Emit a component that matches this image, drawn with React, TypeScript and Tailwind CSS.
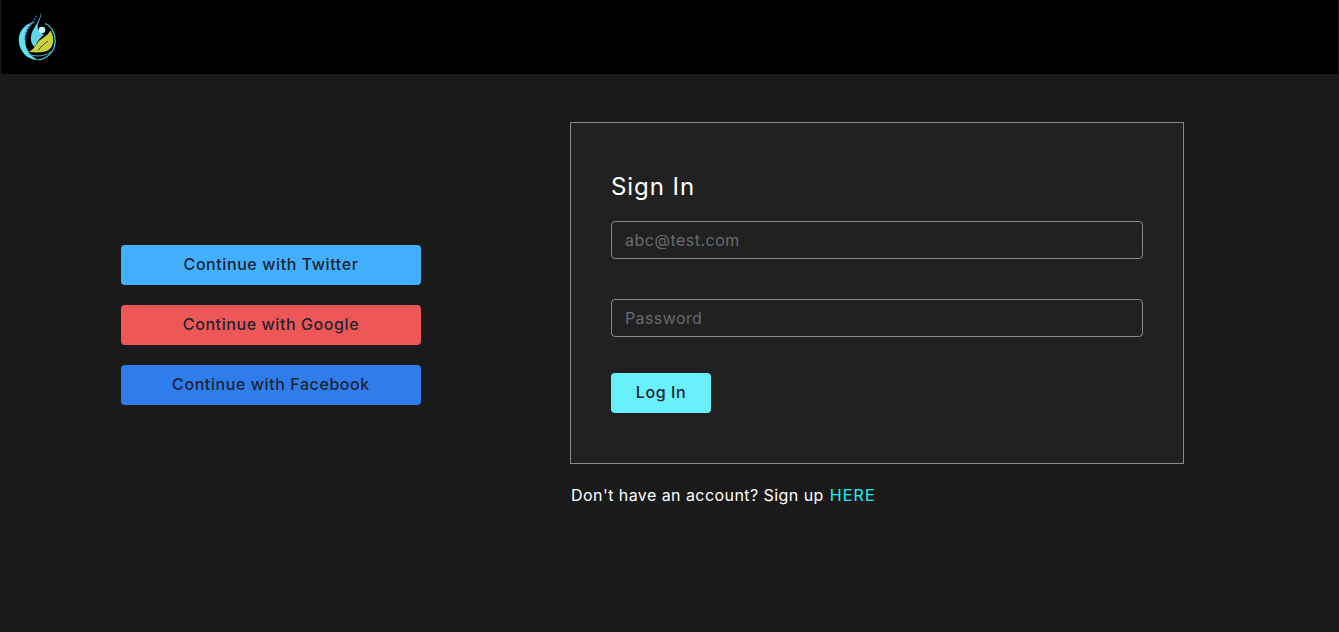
import React from "react";

function Logo() {
  return (
    <svg width="42" height="54" viewBox="17 9 42 54" className="block">
      <path d="M35 21.5 C25 23.5 18.4 31 18.8 41 C19.4 52 28 60 38 60 C30.5 56.5 26 50 25.2 42 C24.6 33.5 28 27 35 21.5 Z" fill="#5fe3f2" />
      <path d="M45 23.5 C51.5 26 55.2 33 55.2 41 C55.2 51 47.5 59 38 60" fill="none" stroke="#4fd3e2" strokeWidth="1.2" />
      <path d="M40.8 12.5 C41.6 18 38.6 21 37.8 25 C37.3 28 38 30 40 32 C41.5 33.5 43 34 44 34.5 C41 37 37 41 35 47 C32 45 30.5 41 31 37 C31.6 31 35 27 37 23.5 C39 20 40.4 16.5 40.8 12.5 Z" fill="#5fd6ea" />
      <circle cx="42" cy="30" r="3.3" fill="#c9f5fa" />
      <path d="M50.5 30.5 C54.5 37 54.5 46 48.5 50 C43.5 53 35 52.8 28.5 51.8 C32.5 50.5 35 47 37 43.5 C40 38.5 46.5 37.5 50.5 30.5 Z" fill="#c9d23a" />
      <path d="M38 50.5 C41 46.5 44.5 43.5 48 41" stroke="#23240f" strokeWidth="0.8" fill="none" />
      <path d="M28.5 54 C35 57 46 57 52.5 50.5" stroke="#3fb9c9" strokeWidth="1" fill="none" />
      <g fill="#2a62c4">
        <circle cx="36" cy="16.5" r="0.9" />
        <circle cx="34.6" cy="19.2" r="1" />
        <circle cx="32.6" cy="21.8" r="1.1" />
        <circle cx="30.6" cy="24.4" r="1.1" />
        <circle cx="28.8" cy="27" r="1.1" />
        <circle cx="27.2" cy="29.8" r="1.1" />
        <circle cx="26" cy="32.8" r="1" />
        <circle cx="25.4" cy="36" r="1" />
        <circle cx="25.2" cy="39" r="0.9" />
        <circle cx="25.4" cy="41.6" r="0.8" />
      </g>
    </svg>
  );
}

function Social({ label, color }: { label: string; color: string }) {
  return (
    <button
      className={`flex h-10 w-[300px] items-center justify-center rounded-[4px] pb-[2px] text-[16px] font-medium tracking-[0.58px] text-[#1f2430] ${color}`}
    >
      {label}
    </button>
  );
}

export default function App() {
  return (
    <div className="flex min-h-[632px] flex-col bg-[#1a1a1a] font-['Inter','Liberation_Sans',sans-serif]">
      <header className="mx-px flex h-[74px] items-start bg-black pl-4 pt-[9px]">
        <Logo />
      </header>
      <main className="flex items-stretch pl-[121px] pt-12">
        <div className="flex h-[406px] w-[449px] flex-col justify-center gap-5">
          <Social label="Continue with Twitter" color="bg-[#42b0ff]" />
          <Social label="Continue with Google" color="bg-[#ee5757]" />
          <Social label="Continue with Facebook" color="bg-[#2f7dec]" />
        </div>
        <div className="w-[614px]">
          <div className="flex h-[342px] flex-col border border-[#8a8a8a] bg-[#212121] px-10 pt-[47px]">
            <h1 className="text-[24px] leading-[34px] font-normal tracking-[0.95px] text-white">Sign In</h1>
            <input
              placeholder="abc@test.com"
              className="mt-[17px] h-[38px] w-full rounded-[4px] border border-[#8a8a8a] bg-transparent px-[13px] text-[16px] tracking-[0.5px] outline-none placeholder:text-[#666b70]"
            />
            <input
              type="text"
              placeholder="Password"
              className="mt-10 h-[38px] w-full rounded-[4px] border border-[#8a8a8a] bg-transparent px-[13px] text-[16px] tracking-[0.4px] outline-none placeholder:text-[#666b70]"
            />
            <button className="mt-9 flex h-10 w-[100px] items-center justify-center rounded-[4px] bg-[#68f0fb] pb-[2px] text-[16px] font-medium tracking-[0.6px] text-[#1f2430]">
              Log In
            </button>
          </div>
          <p className="mt-[19px] pl-px text-[16px] leading-[24px] tracking-[0.44px] text-white">
            Don't have an account? Sign up <a className="ml-px tracking-[1.1px] text-[#19f5f5]">HERE</a>
          </p>
        </div>
      </main>
    </div>
  );
}
